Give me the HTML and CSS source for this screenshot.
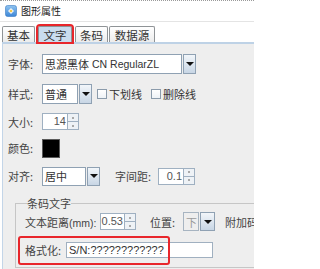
FILE: index.html
```html
<!DOCTYPE html>
<html>
<head>
<meta charset="utf-8">
<link rel="stylesheet" href="styles.css">
</head>
<body>
<div class="win">
  <div class="titlebar">
    <svg class="appicon" width="12" height="12" viewBox="0 0 12 12">
      <defs>
        <linearGradient id="g" x1="0" y1="0" x2="0" y2="1">
          <stop offset="0" stop-color="#8fc3f0"/>
          <stop offset="1" stop-color="#3d86d6"/>
        </linearGradient>
      </defs>
      <rect x="0.5" y="0.5" width="11" height="11" rx="2" fill="url(#g)" stroke="#3a7cc4" stroke-width="0.6"/>
      <path d="M3 6 L6 3 L9 6 L6 9 Z" fill="#ffffff" opacity="0.9"/>
      <circle cx="6" cy="6" r="1.3" fill="#f2c94c"/>
    </svg>
    <span class="title">图形属性</span>
  </div>
  <div class="tabs">
    <div class="tab tab-a">基本</div>
    <div class="tab tab-b active">文字</div>
    <div class="tab tab-c">条码</div>
    <div class="tab tab-d">数据源</div>
  </div>
  <div class="panel">
    <div class="row r1">
      <span class="lbl">字体:</span>
      <div class="combo combo-font">
        <span class="cfield">思源黑体 <span class="lat">CN RegularZL</span></span>
        <span class="cbtn"><i class="tri"></i></span>
      </div>
    </div>
    <div class="row r2">
      <span class="lbl">样式:</span>
      <div class="combo combo-style">
        <span class="cfield">普通</span>
        <span class="cbtn"><i class="tri"></i></span>
      </div>
      <span class="chk chk-1"></span><span class="chktxt">下划线</span>
      <span class="chk chk-2"></span><span class="chktxt">删除线</span>
    </div>
    <div class="row r3">
      <span class="lbl">大小:</span>
      <div class="spin spin-size">
        <span class="sfield lat">14</span>
        <span class="sarrows"><span class="sa"><i class="dot"></i></span><span class="sa"><i class="dot"></i></span></span>
      </div>
    </div>
    <div class="row r4">
      <span class="lbl">颜色:</span>
      <span class="swatch"></span>
    </div>
    <div class="row r5">
      <span class="lbl">对齐:</span>
      <div class="combo combo-align">
        <span class="cfield">居中</span>
        <span class="cbtn"><i class="tri"></i></span>
      </div>
      <span class="lbl2 lbl-spacing">字间距:</span>
      <div class="spin spin-gap">
        <span class="sfield lat">0.1</span>
        <span class="sarrows"><span class="sa"><i class="dot"></i></span><span class="sa"><i class="dot"></i></span></span>
      </div>
    </div>
    <fieldset class="group">
      <legend class="legend">条码文字</legend>
      <div class="row r6">
        <span class="lbl-dist">文本距离<span class="lat">(mm):</span></span>
        <div class="spin spin-dist">
          <span class="sfield lat">0.53</span>
          <span class="sarrows"><span class="sa"><i class="dot"></i></span><span class="sa"><i class="dot"></i></span></span>
        </div>
        <span class="lbl-pos">位置:</span>
        <div class="combo combo-pos disabled">
          <span class="cfield">下</span>
          <span class="cbtn"><i class="tri"></i></span>
        </div>
        <span class="lbl-extra">附加码</span>
      </div>
      <div class="row r7">
        <span class="lbl-fmt">格式化:</span>
        <span class="tfield lat">S/N:????????????</span>
        <span class="redbox"></span>
      </div>
    </fieldset>
  </div>
</div>
</body>
</html>
```

FILE: styles.css
```css
* { box-sizing: border-box; }
html, body { margin: 0; padding: 0; background: #ffffff; }
body {
  font-family: "Noto Sans CJK SC", "Liberation Sans", sans-serif;
  font-size: 11px;
  color: #3a3a3a;
}
.win {
  width: 254px;
  height: 269px;
  overflow: hidden;
  background: #ffffff;
}
.titlebar {
  height: 22px;
  display: flex;
  align-items: center;
  padding-left: 5px;
  gap: 4px;
  border-top: 1px dotted #9a9a9a;
  border-bottom: 1px solid #e4e4e4;
}
.appicon { flex: none; }
.title { font-size: 10px; color: #222; line-height: 12px; }
.tabs {
  height: 20px;
  display: flex;
  align-items: flex-end;
  padding-left: 2px;
  background: #ffffff;
}
.tab {
  height: 16px;
  border: 1px solid #8f9396;
  border-bottom: none;
  border-radius: 2px 2px 0 0;
  background: linear-gradient(#ffffff, #ececec);
  display: flex;
  align-items: center;
  justify-content: center;
  font-size: 11.5px;
  color: #333;
  line-height: 14px;
}
.tab-a { width: 33px; }
.tab-b { width: 34px; margin-left: 3px; }
.tab-c { width: 33px; margin-left: 3px; }
.tab-d { width: 46px; margin-left: 1px; }
.tab.active {
  background: #c9dcee;
  outline: 2px solid #e8262b;
  outline-offset: 0px;
  position: relative;
}
.panel {
  margin-left: 2px;
  background: #eeeeee;
  border-top: 2px solid #bed2e6;
  border-left: 1px solid #c3d5e8;
  padding: 5px 0 0 5px;
  height: 227px;
}
.row {
  display: flex;
  align-items: center;
}
.r1 { height: 30px; }
.r2 { height: 30px; }
.r3 { height: 25px; }
.r4 { height: 28px; }
.r5 { height: 28px; }
.lbl { width: 34px; flex: none; color: #444; }
.lat { font-family: "Liberation Sans", sans-serif; font-size: 10.5px; }

.combo { display: flex; flex: none; }
.cfield {
  flex: 1;
  background: #ffffff;
  border: 1px solid #8fa1b3;
  display: flex;
  align-items: center;
  padding-left: 2px;
  color: #333;
  white-space: nowrap;
  gap: 3px;
}
.cbtn {
  width: 13px;
  flex: none;
  border: 1px solid #8fa1b3;
  margin-left: 1px;
  background: linear-gradient(#f2f6fa, #c8d6e5);
  display: flex;
  align-items: center;
  justify-content: center;
}
.tri {
  width: 0; height: 0;
  border-left: 4px solid transparent;
  border-right: 4px solid transparent;
  border-top: 4px solid #111;
}
.combo-font { width: 154px; height: 20px; }
.combo-style { width: 50px; height: 20px; }
.combo-align { width: 58px; height: 19px; }
.combo-pos { width: 32px; height: 19px; }
.combo-pos .cbtn { width: 15px; }
.disabled .cfield { background: #eeeeee; color: #9a9a9a; border-color: #a7b4c1; }

.chk {
  width: 10px; height: 10px;
  flex: none;
  border: 1px solid #8b9bab;
  background: linear-gradient(#ffffff, #eef2f6);
}
.chk-1 { margin-left: 5px; }
.chk-2 { margin-left: 9px; }
.chktxt { margin-left: 2px; color: #333; }

.spin { display: flex; flex: none; height: 17px; }
.sfield {
  flex: 1;
  background: #fff;
  border: 1px solid #9fb0c1;
  text-align: right;
  padding-right: 1px;
  color: #555;
  line-height: 15px;
  font-size: 11px;
}
.sarrows {
  width: 11px;
  flex: none;
  display: flex;
  flex-direction: column;
  border: 1px solid #9fb0c1;
  border-left: none;
  background: #eef2f6;
}
.sa {
  flex: 1;
  display: flex;
  align-items: center;
  justify-content: center;
}
.sa + .sa { border-top: 1px solid #9fb0c1; }
.dot { width: 2px; height: 2px; background: #a9a9a9; }
.spin-size { width: 37px; }
.spin-gap { width: 37px; }
.spin-dist { width: 36px; }

.swatch {
  width: 18px; height: 19px;
  background: #000;
  border: 1px solid #5a5a5a;
  flex: none;
}
.lbl2 { flex: none; }
.lbl-spacing { margin-left: 15px; width: 43px; color: #444; }

.group {
  margin: 6px -30px 0 7px;
  padding: 0 0 0 9px;
  border: 1px solid #c6c6c6;
  min-width: 0;
}
.legend {
  padding: 0;
  margin-left: 2px;
  line-height: 14px;
  color: #444;
}
.r6 { height: 23px; }
.r7 { height: 34px; position: relative; }
.lbl-dist { width: 75px; flex: none; color: #444; white-space: nowrap; }
.lbl-pos { margin-left: 14px; width: 33px; flex: none; color: #444; }
.lbl-extra { margin-left: 10px; flex: none; white-space: nowrap; color: #444; }
.lbl-fmt { width: 41px; flex: none; color: #444; }
.tfield {
  width: 147px;
  height: 16px;
  flex: none;
  background: #fff;
  border: 1px solid #a0b0c0;
  padding-left: 2px;
  line-height: 14px;
  color: #333;
  font-size: 11px;
}
.redbox {
  position: absolute;
  left: -7px;
  top: 3px;
  width: 152px;
  height: 29px;
  border: 2px solid #e8262b;
  border-radius: 3px;
  pointer-events: none;
}
```
